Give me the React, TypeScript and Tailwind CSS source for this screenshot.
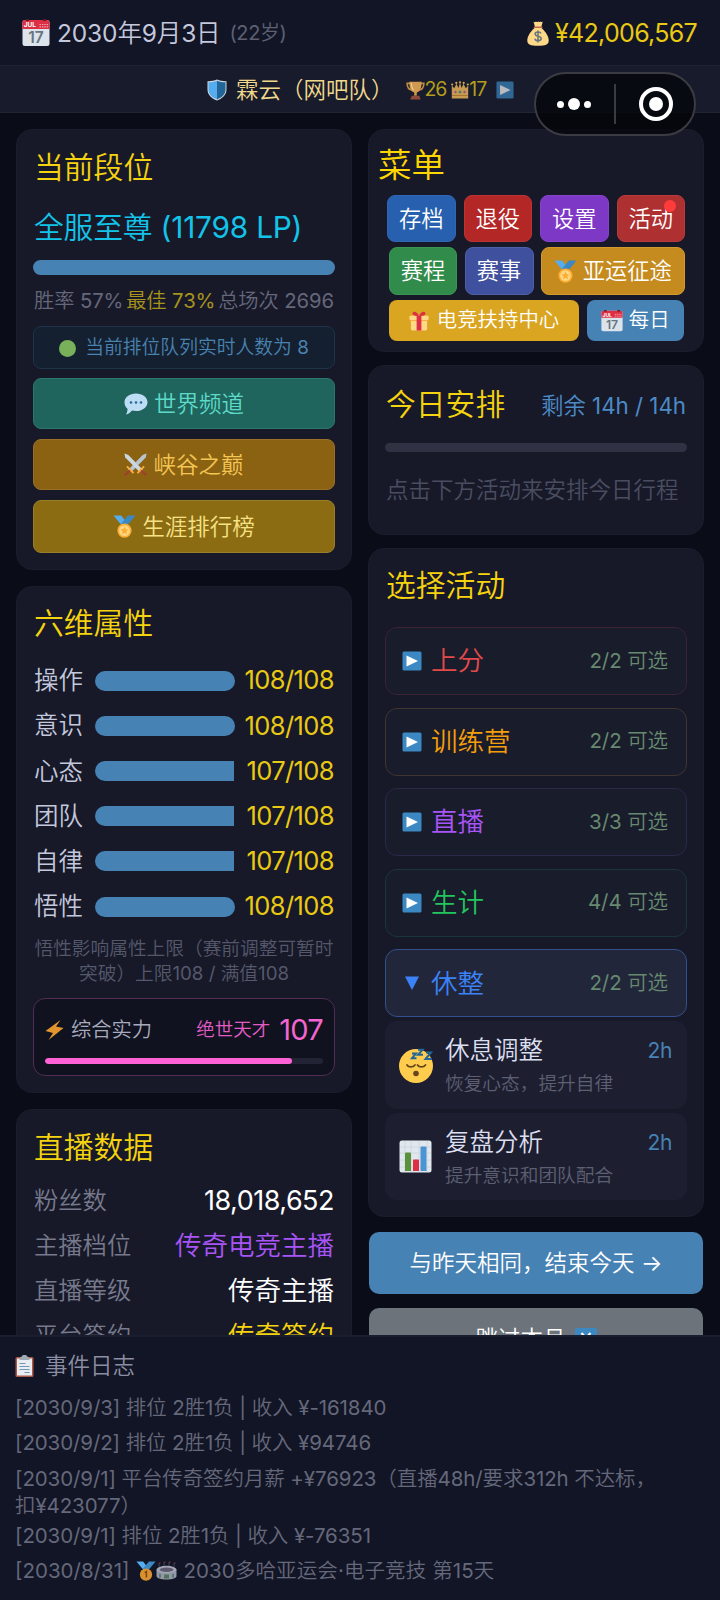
import React from "react"

interface IconProps {
    className?: string
}

const Calendar: React.FC<IconProps> = ({ className }) => (
    <svg viewBox="0 0 28 28" className={className}>
        <rect x="0.5" y="1" width="27" height="26" rx="2.5" fill="#dde3ea" />
        <path d="M.5 10V3.500a2.500 2.500 0 0 1 2.500-2.500h22a2.500 2.500 0 0 1 2.500 2.500V10z" fill="#dd2e44" />
        <path d="M4 0h3v2H4zM21 0h3v2h-3z" fill="#5b1a26" />
        <text x="1.800" y="8.300" fontSize="6.500" fontWeight="700" fill="#fff" fontFamily="Inter, sans-serif">JUL</text>
        <path d="M17.500 5.500h9M17.500 7.800h9" stroke="#f4abb4" strokeWidth="1.200" strokeDasharray="1.400 1" />
        <text x="14" y="24" textAnchor="middle" fontSize="15.500" fontWeight="600" fill="#66757f" fontFamily="Inter, sans-serif">17</text>
    </svg>
)

const MoneyBag: React.FC<IconProps> = ({ className }) => (
    <svg viewBox="0 0 22 25" className={className}>
        <path d="M7.500 7C3 11 0 16 .3 20c.3 3.500 3 4.700 10.700 4.700S21.400 23.500 21.700 20C22 16 19 11 14.500 7z" fill="#fdd888" />
        <path d="M6.500.8c1 .8 1.700.2 2.500-.3.800.6 1.500.8 2.300 0 .8.700 1.600.6 2.400-.1.800.500 1.200.7 2 .4L14.300 6H8z" fill="#fdd888" />
        <path d="M7.300 6.200h7.600" stroke="#bf6952" strokeWidth="1.500" strokeLinecap="round" />
        <path d="M14 12.600c-.4-1.100-1.600-1.600-3-1.600-1.700 0-2.900.8-2.900 2.100 0 3 6.100 1.300 6.100 4.400 0 1.400-1.300 2.200-3.100 2.200-1.600 0-2.900-.600-3.300-2M11 9.500v12" fill="none" stroke="#67757f" strokeWidth="1.500" />
    </svg>
)

const Shield: React.FC<IconProps> = ({ className }) => (
    <svg viewBox="0 0 20 22" className={className}>
        <path d="M10 .5C7 1.900 3.500 2.300.5 2.200v8.300c0 5.500 4 9 9.500 11 5.500-2 9.500-5.500 9.500-11V2.200C16.500 2.300 13 1.900 10 .5z" fill="#ccd6dd" />
        <path d="M10 1.700C7 2.900 4 3.300 1.500 3.200v7.300c0 4.800 3.500 8 8.500 9.900z" fill="#55acee" />
        <path d="M10 1.700c3 1.200 6 1.600 8.500 1.500v7.300c0 4.800-3.500 8-8.500 9.900z" fill="#226699" />
    </svg>
)

const Trophy: React.FC<IconProps> = ({ className }) => (
    <svg viewBox="0 0 20 20" className={className}>
        <path d="M4 2.500H1.200c0 4.500 2 6.500 5.300 7M16 2.500h2.800c0 4.500-2 6.500-5.300 7" fill="none" stroke="#c08a45" strokeWidth="1.700" />
        <path d="M3.500.8h13C16.500 7 15 11 11.300 12v3.500H8.700V12C5 11 3.500 7 3.500.8z" fill="#cf9a50" />
        <path d="M5.500 1.800c.3 4 1 6.500 2.500 8" fill="none" stroke="#ecca8c" strokeWidth="1.300" />
        <path d="M6 15.500h8l1.500 4h-11z" fill="#8d4a38" />
    </svg>
)

const Crown: React.FC<IconProps> = ({ className }) => (
    <svg viewBox="0 0 18 18" className={className}>
        <path d="M.8 17.500V4.500l2.400 2.700L5.500 2.800 7.500 7 9 1.500 10.500 7l2-4.200 2.300 4.400 2.400-2.700v13z" fill="#c99b52" />
        <g fill="#d3a55a"><circle cx="1.200" cy="3.500" r="1.100" /><circle cx="5.300" cy="1.900" r="1.100" /><circle cx="9" cy="1.300" r="1.100" /><circle cx="12.700" cy="1.900" r="1.100" /><circle cx="16.800" cy="3.500" r="1.100" /></g>
        <circle cx="9" cy="11" r="1.500" fill="#4e8361" />
        <circle cx="4.500" cy="11" r="1.200" fill="#8d5488" />
        <circle cx="13.500" cy="11" r="1.200" fill="#8d5488" />
        <path d="M1 14.500h16" stroke="#a3762f" />
    </svg>
)

const Play: React.FC<IconProps> = ({ className }) => (
    <svg viewBox="0 0 20 20" className={className}>
        <rect x=".5" y=".5" width="19" height="19" rx="1.500" fill="#3b88c3" />
        <path d="M4.500 4.500v11L16 10z" fill="#fff" />
    </svg>
)

const Medal: React.FC<IconProps & { rank?: boolean }> = ({ className, rank }) => (
    <svg viewBox="0 0 24 24" className={className}>
        <path d="M.5.500h8l7 9-5 3z" fill="#55acee" />
        <path d="M23.500.500h-8L8.500 9l5 3.500z" fill="#3b88c3" />
        <circle cx="12" cy="16.300" r="7.400" fill={rank ? "#d9902f" : "#ffac33"} />
        {rank
            ? <path d="M10.500 14l2-1.300v7" fill="none" stroke="#7a4312" strokeWidth="1.700" />
            : <g><circle cx="12" cy="16.300" r="5.600" fill="#ffd983" /><path d="M12 11.800l1.300 3 3.200.2-2.500 2 .8 3.200-2.800-1.700-2.800 1.700.8-3.200-2.500-2 3.200-.2z" fill="#ffac33" /></g>}
    </svg>
)

const Gift: React.FC<IconProps> = ({ className }) => (
    <svg viewBox="0 0 21 21" className={className}>
        <path d="M2 9h17v10a1.500 1.500 0 0 1-1.500 1.500h-14A1.500 1.500 0 0 1 2 19z" fill="#fdd888" />
        <rect x=".5" y="5" width="20" height="5.500" rx="1.200" fill="#fcab40" />
        <rect x=".5" y="5" width="20" height="4.500" rx="1.200" fill="#fdd888" />
        <path d="M8 5h5v15.500H8z" fill="#dd2e44" />
        <path d="M10.500 5C7 5.500 3.500 4.500 3.700 2.500 4-.3 8.500.3 10.500 5zM10.500 5c3.500.5 7-.5 6.800-2.500C17-.3 12.500.3 10.500 5z" fill="#dd2e44" />
    </svg>
)

const Bubble: React.FC<IconProps> = ({ className }) => (
    <svg viewBox="0 0 24 22" className={className}>
        <path d="M12 .5c6.400 0 11.500 3.700 11.500 8.700S18.400 18 12 18c-1.400 0-2.700-.2-4-.5-1.300 1.700-3.500 3.500-6 4 1-1.500 1.600-3.500 1.500-5.700C1.600 14.200.5 11.800.5 9.200.5 4.200 5.600.5 12 .5z" fill="#bdddf4" />
        <g fill="#2a6797"><circle cx="7" cy="9.500" r="1.300" /><circle cx="12" cy="9.500" r="1.300" /><circle cx="17" cy="9.500" r="1.300" /></g>
    </svg>
)

const Swords: React.FC<IconProps> = ({ className }) => (
    <svg viewBox="0 0 24 24" className={className}>
        <path d="M23.500.5L6 19 4.500 17.500 20 2z" fill="#8899a6" />
        <path d="M23.500.5l-.8 4.300L7.500 20 4.500 17.500 19.500 2z" fill="#b8c4ce" />
        <path d="M.5.5L18 19l1.500-1.500L4 2z" fill="#8899a6" />
        <path d="M.5.5l.8 4.300L16.500 20l3-2.500L4.500 2z" fill="#ccd6dd" />
        <path d="M3 14l7 7M21 14l-7 7" stroke="#ffac33" strokeWidth="2" />
        <path d="M1.500 22.500l4-3.500M22.500 22.500l-4-3.500" stroke="#a0402e" strokeWidth="2.400" strokeLinecap="round" />
    </svg>
)

const Bolt: React.FC<IconProps> = ({ className }) => (
    <svg viewBox="0 0 19 20" className={className}>
        <path d="M15.500 0L.5 11l7.500 2L3.500 20l15-12-7.500-1.500z" fill="#e3962e" />
    </svg>
)

const Sleepy: React.FC<IconProps> = ({ className }) => (
    <svg viewBox="0 0 35 35" className={className}>
        <circle cx="17" cy="18" r="17" fill="#ffcc4d" />
        <path d="M8 17c1.500 2.600 6 2.600 8 0M18.500 17c1.500 2.600 6 2.600 8 0" fill="none" stroke="#65471b" strokeWidth="1.800" strokeLinecap="round" />
        <circle cx="17" cy="25.500" r="2.800" fill="#65471b" />
        <path d="M13 5.500h4l-4 4.700h4.500M19 1.800h4.500l-4.500 5h5M27 4.500h5l-5.500 6.500h6.500" fill="none" stroke="#226699" strokeWidth="2" />
    </svg>
)

const Chart: React.FC<IconProps> = ({ className }) => (
    <svg viewBox="0 0 33 33" className={className}>
        <rect x=".5" y=".5" width="32" height="32" rx="2.500" fill="#e1e8ed" />
        <path d="M6 1v31M12 1v31M20 1v31M28 1v31M1 7h31M1 13h31M1 20h31M1 27h31" stroke="#ccd6dd" strokeWidth=".9" />
        <path d="M6 13.500a1 1 0 0 1 1-1h4a1 1 0 0 1 1 1V31H6z" fill="#5c913b" />
        <path d="M14 20.500a1 1 0 0 1 1-1h4a1 1 0 0 1 1 1V31h-6z" fill="#dd2e44" />
        <path d="M21.500 7.500a1 1 0 0 1 1-1h4a1 1 0 0 1 1 1V31h-6z" fill="#4b94d4" />
    </svg>
)

const SkipDown: React.FC<IconProps> = ({ className }) => (
    <svg viewBox="0 0 22 22" className={className}>
        <rect width="22" height="22" rx="1.500" fill="#3b88c3" />
        <path d="M6.500 5l4.500 5 4.500-5M6.500 12l4.500 5 4.500-5" fill="none" stroke="#fff" strokeWidth="2.200" />
    </svg>
)

const Clipboard: React.FC<IconProps> = ({ className }) => (
    <svg viewBox="0 0 18 22" className={className}>
        <rect x="0" y="2" width="18" height="20" rx="1.500" fill="#a9584a" />
        <rect x="1.500" y="3.500" width="15" height="17" fill="#e9edf1" />
        <path d="M4 4c0-2 2-1.800 3-3.200a2 2 0 0 1 4 0C12 2.200 14 2 14 4v1H4z" fill="#9eabb5" />
        <path d="M4 8.500h6M4 11.500h10M4 14.500h10M9 17.500h5" stroke="#7398b5" strokeWidth="1.100" />
    </svg>
)

const Stadium: React.FC<IconProps> = ({ className }) => (
    <svg viewBox="0 0 21 19" className={className}>
        <path d="M3 2v5M8 1v5M13 1v5M18 2v5" stroke="#4b5263" strokeWidth=".8" />
        <path d="M3 2h1.500M8 1h1.500M13 1h1.500M18 2h1.500" stroke="#8b3648" />
        <path d="M.5 8.500V15c0 2 4 3.500 10 3.500s10-1.500 10-3.500V8.500z" fill="#8f9aa3" />
        <ellipse cx="10.500" cy="8.500" rx="10" ry="3.700" fill="#a5a7b8" />
        <ellipse cx="10.500" cy="8.800" rx="7" ry="2.200" fill="#5d5a70" />
        <path d="M4 12.800v4M17 12.800v4" stroke="#626b80" strokeWidth="1.700" />
        <path d="M8 13.500h5v4H8z" fill="#56705c" />
    </svg>
)

interface AttributeProps {
    name: string
    value: number
}

const Attribute: React.FC<AttributeProps> = ({ name, value }) => (
    <div className="flex h-[45.2px] items-center pr-px pl-px">
        <span className="w-[61px] text-[24.5px] text-[#c4c8dc]">{name}</span>
        <div className="h-5 w-[140px]">
            <div
                className={value >= 108 ? "h-full rounded-full bg-[#4682b4]" : "h-full rounded-l-full bg-[#4682b4]"}
                style={{ width: `${(value / 108) * 100}%` }}
            />
        </div>
        <span className="ml-auto text-[25.5px] tracking-[-0.6px] text-[#e9c913]">{value}/108</span>
    </div>
)

interface StreamRowProps {
    label: string
    value: string
    valueClass: string
}

const StreamRow: React.FC<StreamRowProps> = ({ label, value, valueClass }) => (
    <div className="flex h-[45px] items-center justify-between pr-px pl-px">
        <span className="text-[24.3px] text-[#77798c]">{label}</span>
        <span className={valueClass}>{value}</span>
    </div>
)

interface CategoryProps {
    name: string
    count: string
    color: string
    border: string
    open?: boolean
}

const Category: React.FC<CategoryProps> = ({ name, count, color, border, open }) => (
    <div className={`flex h-[68px] items-center rounded-xl border pr-[18px] pl-4 ${border} ${open ? "bg-[#22263a]" : "bg-[#191c2b]"}`}>
        {open
            ? <svg viewBox="0 0 20 20" className="size-5"><path d="M3 3.500h14L10 17z" fill="#3b82f6" /></svg>
            : <Play className="size-5" />}
        <span className={`ml-[9px] text-[26.5px] ${color}`}>{name}</span>
        <span className="ml-auto text-[20.5px] tracking-[-0.1px] text-[#66896f]">{count}</span>
    </div>
)

interface ActivityProps {
    icon: React.ReactNode
    name: string
    detail: string
}

const Activity: React.FC<ActivityProps> = ({ icon, name, detail }) => (
    <div className="mt-1 flex h-[87.500px] rounded-xl bg-[#1d1f30] pr-[15px] pl-[14px]">
        <div className="flex w-[46px] items-center">{icon}</div>
        <div className="pt-[11px]">
            <div className="h-9 text-[24.5px] leading-9 text-[#dcdff0]">{name}</div>
            <div className="h-8 text-[18.700px] leading-8 text-[#5d5f73]">{detail}</div>
        </div>
        <span className="mt-[12px] ml-auto text-[21px] leading-9 tracking-[-0.3px] text-[#4682b4]">2h</span>
    </div>
)

const attributes = [
    { name: "操作", value: 108 },
    { name: "意识", value: 108 },
    { name: "心态", value: 107 },
    { name: "团队", value: 107 },
    { name: "自律", value: 107 },
    { name: "悟性", value: 108 },
]

const categories = [
    { name: "上分", count: "2/2 可选", color: "text-[#e24a4a]", border: "border-[#3b2333]" },
    { name: "训练营", count: "2/2 可选", color: "text-[#f59e0b]", border: "border-[#40362f]" },
    { name: "直播", count: "3/3 可选", color: "text-[#a855f7]", border: "border-[#2d2848]" },
    { name: "生计", count: "4/4 可选", color: "text-[#22c55e]", border: "border-[#1b353b]" },
    { name: "休整", count: "2/2 可选", color: "text-[#3b82f6]", border: "border-[#31508c]", open: true },
]

const Header = () => (
    <>
        <header className="flex h-[66px] shrink-0 items-center border-b border-[#1f2233] bg-[#121525] pt-px pr-[23px] pl-[22px]">
            <Calendar className="size-7" />
            <span className="ml-[7px] text-[24.500px] tracking-[-0.15px] text-[#c4c8dc]">2030年9月3日</span>
            <span className="ml-[9px] text-[20px] tracking-[-0.4px] text-[#5d6073]">(22岁)</span>
            <MoneyBag className="ml-auto h-[25px] w-[22px]" />
            <span className="ml-[6px] pt-px text-[25px] tracking-[-0.7px] text-[#e9c913]">¥42,006,567</span>
        </header>
        <div className="flex h-[47px] shrink-0 items-center border-b border-[#212433] bg-[#181b2b] pt-[2px] pl-[207px]">
            <Shield className="h-[22px] w-5" />
            <span className="ml-[9px] text-[22.500px] text-[#f0d98c]">霖云（网吧队）</span>
            <Trophy className="ml-3 size-[19px]" />
            <span className="text-[19.500px] tracking-[-1.1px] text-[#b39d1b]">26</span>
            <Crown className="ml-[5px] size-[18px]" />
            <span className="text-[19.500px] tracking-[-1.1px] text-[#b39d1b]">17</span>
            <Play className="ml-[10px] size-[18px] opacity-70" />
        </div>
    </>
)

const Capsule = () => (
    <div className="absolute top-[72px] left-[534px] flex h-16 w-[162px] items-center rounded-full border-2 border-[#3b3c43] bg-[#05060b]/80">
        <div className="flex w-[76px] items-center justify-center gap-1">
            <i className="size-[7px] rounded-full bg-white" />
            <i className="size-3 rounded-full bg-white" />
            <i className="size-[7px] rounded-full bg-white" />
        </div>
        <div className="ml-[2px] h-10 w-0.5 bg-[#3b3c43]" />
        <div className="flex flex-1 justify-center pl-[2px]">
            <div className="flex size-[34px] items-center justify-center rounded-full border-4 border-white">
                <i className="size-[14px] rounded-full bg-white" />
            </div>
        </div>
    </div>
)

const LeftColumn = () => (
    <div className="flex w-[336px] flex-col gap-4">
        <section className="h-[441px] shrink-0 rounded-2xl border border-[#1a1d2c] bg-[#171929] px-4">
            <h2 className="mt-[15px] ml-px text-[29.800px] leading-[44px] text-[#f5d30e]">当前段位</h2>
            <div className="mt-4 ml-px text-[29.800px] leading-[44px] tracking-[-0.2px] text-[#14c3e8]">全服至尊 (11798 LP)</div>
            <div className="mt-[11px] h-[15px] rounded-full bg-[#4682b4]" />
            <div className="mt-[11px] flex h-[30px] items-center justify-between px-px text-[20.300px] tracking-[-0.1px] text-[#65677b]">
                <span>胜率 57%</span>
                <span className="text-[#a8931c]">最佳 73%</span>
                <span>总场次 2696</span>
            </div>
            <div className="mt-[10px] flex h-[43px] items-center justify-center rounded-lg border border-[#1e3449] bg-[#142030] pt-px text-[18.800px] text-[#4a83b0]">
                <i className="mr-[9px] size-[17px] rounded-full bg-[#78b159]" />
                当前排位队列实时人数为 8
            </div>
            <div className="mt-[9px] flex h-[51px] items-center justify-center rounded-lg border border-[#2a776d] bg-[#1f645d] text-[22.500px] text-[#5ddac8]">
                <Bubble className="mr-[6px] h-[22px] w-6" />世界频道
            </div>
            <div className="mt-[10px] flex h-[51px] items-center justify-center rounded-lg border border-[#9a7028] bg-[#8b6212] text-[22.500px] text-[#f3c552]">
                <Swords className="mr-[6px] size-[23px]" />峡谷之巅
            </div>
            <div className="mt-[10px] flex h-[53px] items-center justify-center rounded-lg border border-[#98802b] bg-[#8b6c12] text-[22.500px] text-[#f6e184]">
                <Medal className="mr-[6px] size-[23px]" />生涯排行榜
            </div>
        </section>

        <section className="h-[507px] shrink-0 rounded-2xl border border-[#1a1d2c] bg-[#171929] px-4">
            <h2 className="mt-[14px] mb-[13px] ml-px text-[29.800px] leading-[44px] text-[#f5d30e]">六维属性</h2>
            {attributes.map((a) => <Attribute key={a.name} {...a} />)}
            <p className="mt-[7px] text-center text-[18.700px] leading-[25px] text-[#55586b]">
                悟性影响属性上限（赛前调整可暂时<br />突破）上限108 / 满值108
            </p>
            <div className="mt-[12px] h-[78px] rounded-xl border border-[#532c54] bg-[#101220] px-[11px]">
                <div className="mt-[8px] flex h-[46px] items-center">
                    <Bolt className="h-5 w-[19px]" />
                    <span className="ml-[7px] text-[20.300px] text-[#a8abbe]">综合实力</span>
                    <span className="ml-auto text-[18.500px] text-[#e35cc5]">绝世天才</span>
                    <span className="ml-[9px] text-[29px] tracking-[-0.7px] text-[#f365cf]">107</span>
                </div>
                <div className="mt-[5px] h-1.5 overflow-hidden rounded-full bg-[#222335]">
                    <div className="h-full w-[89%] rounded-full bg-[#ff62d6]" />
                </div>
            </div>
        </section>

        <section className="h-[507px] shrink-0 rounded-2xl border border-[#1a1d2c] bg-[#171929] px-4">
            <h2 className="mt-[15px] mb-[9px] ml-px text-[29.800px] leading-[44px] text-[#f5d30e]">直播数据</h2>
            <StreamRow label="粉丝数" value="18,018,652" valueClass="pt-px text-[27px] tracking-[-0.5px] text-white" />
            <StreamRow label="主播档位" value="传奇电竞主播" valueClass="text-[26.500px] text-[#a855f7]" />
            <StreamRow label="直播等级" value="传奇主播" valueClass="text-[26.500px] text-white" />
            <StreamRow label="平台签约" value="传奇签约" valueClass="text-[26.500px] text-[#f5d30e]" />
        </section>
    </div>
)

const RightColumn = () => (
    <div className="flex w-[336px] flex-col">
        <section className="h-[223px] shrink-0 rounded-2xl border border-[#1a1d2c] bg-[#171929] text-white">
            <h2 className="mt-3 ml-[9px] text-[33.500px] leading-[46px] text-[#ffd700]">菜单</h2>
            <div className="mt-[7px] ml-[18px] flex gap-2 text-[22.300px]">
                <div className="flex h-[47px] w-[68.500px] items-center justify-center rounded-lg border border-[#2f66b5] bg-[#2660ae]">存档</div>
                <div className="flex h-[47px] w-[68.500px] items-center justify-center rounded-lg border border-[#bd3333] bg-[#b32727]">退役</div>
                <div className="flex h-[47px] w-[68.500px] items-center justify-center rounded-lg border border-[#8542ca] bg-[#7e38c6]">设置</div>
                <div className="relative flex h-[47px] w-[68.500px] items-center justify-center rounded-lg border border-[#b83a3a] bg-[#af3030]">
                    活动
                    <i className="absolute top-1 right-2 size-3 rounded-full bg-[#ff3b3b]" />
                </div>
            </div>
            <div className="mt-[5px] ml-5 flex gap-[7.500px] text-[22.300px]">
                <div className="flex h-12 w-[68px] items-center justify-center rounded-lg border border-[#3a9553] bg-[#318b4a]">赛程</div>
                <div className="flex h-12 w-[69px] items-center justify-center rounded-lg border border-[#4e60a8] bg-[#3f509e]">赛事</div>
                <div className="flex h-12 w-[143.500px] items-center justify-center rounded-lg border border-[#d29a2d] bg-[#c58b1e]">
                    <Medal className="mr-[6px] size-[23px]" />亚运征途
                </div>
            </div>
            <div className="mt-[5px] ml-5 flex gap-2 text-[20.400px]">
                <div className="flex h-[41px] w-[190px] items-center justify-center rounded-lg bg-[#daa520]">
                    <Gift className="mr-2 size-[20px]" />电竞扶持中心
                </div>
                <div className="flex h-[41px] w-[96.500px] items-center justify-center rounded-lg bg-[#4682b4]">
                    <Calendar className="mr-[6px] size-[22px]" />每日
                </div>
            </div>
        </section>

        <section className="mt-[13px] h-[170px] shrink-0 rounded-2xl border border-[#1a1d2c] bg-[#171929] px-4">
            <div className="mt-[15px] ml-px flex h-[46px] items-center justify-between pr-px">
                <h2 className="text-[29.800px] text-[#f5d30e]">今日安排</h2>
                <span className="mt-[4px] text-[22.300px] text-[#4c8bc6]">剩余 14h / 14h</span>
            </div>
            <div className="mt-[16px] h-[9px] rounded-full bg-[#303243]" />
            <p className="mt-[22px] ml-px text-[22.500px] leading-8 text-[#4a4d60]">点击下方活动来安排今日行程</p>
        </section>

        <section className="mt-[13px] h-[669px] shrink-0 rounded-2xl border border-[#1a1d2c] bg-[#171929] px-4">
            <h2 className="mt-[14px] ml-px text-[29.800px] leading-[44px] text-[#f5d30e]">选择活动</h2>
            <div className="mt-5 flex flex-col gap-[12.600px]">
                {categories.map((c) => <Category key={c.name} {...c} />)}
            </div>
            <Activity icon={<Sleepy className="size-[35px]" />} name="休息调整" detail="恢复心态，提升自律" />
            <Activity icon={<Chart className="size-[33px]" />} name="复盘分析" detail="提升意识和团队配合" />
        </section>

        <div className="mt-[15px] ml-px flex h-[62px] w-[334px] shrink-0 items-center justify-center rounded-[10px] bg-[#4682b4] text-[22.500px] text-white">
            与昨天相同，结束今天 →
        </div>
        <div className="mt-[14px] ml-px flex h-[62px] w-[334px] shrink-0 items-center justify-center rounded-[10px] bg-[#6c737b] text-[22.500px] text-white">
            跳过本月<SkipDown className="ml-[9px] size-[22px]" />
        </div>
    </div>
)

const EventLog = () => (
    <footer className="h-[265px] shrink-0 border-t-2 border-[#1b1e2e] bg-[#121525] px-[15px] text-[20.500px] text-[#65687b]">
        <div className="mt-[11px] mb-[10px] flex h-9 items-center text-[22.500px] text-[#8b8ea2]">
            <Clipboard className="h-[22px] w-[19px]" />
            <span className="ml-[11px]">事件日志</span>
        </div>
        <div className="h-[35px] leading-[27px] tracking-[-0.1px]">[2030/9/3] 排位 2胜1负 | 收入 ¥-161840</div>
        <div className="h-[36px] leading-[27px] tracking-[-0.1px]">[2030/9/2] 排位 2胜1负 | 收入 ¥94746</div>
        <div className="h-[57px] leading-[27px] tracking-[-0.1px]">[2030/9/1] 平台传奇签约月薪 +¥76923（直播48h/要求312h 不达标，<br />扣¥423077）</div>
        <div className="h-[35px] leading-[27px] tracking-[-0.1px]">[2030/9/1] 排位 2胜1负 | 收入 ¥-76351</div>
        <div className="flex h-[27px] items-center leading-[27px]">
            <span>[2030/8/31]</span>
            <Medal rank className="ml-[7px] size-5" />
            <Stadium className="h-[19px] w-[21px]" />
            <span className="ml-[6px] tracking-[0.1px]">2030多哈亚运会·电子竞技 第15天</span>
        </div>
    </footer>
)

export default function App() {
    return (
        <div className="relative flex h-[1600px] w-[720px] flex-col overflow-hidden bg-[#0a0c17] font-[Inter,'Noto_Sans_CJK_SC_DemiLight','Noto_Sans_CJK_SC',sans-serif] font-normal whitespace-nowrap">
            <Header />
            <main className="flex min-h-0 flex-1 justify-between overflow-hidden px-4 pt-4">
                <LeftColumn />
                <RightColumn />
            </main>
            <EventLog />
            <Capsule />
        </div>
    )
}
